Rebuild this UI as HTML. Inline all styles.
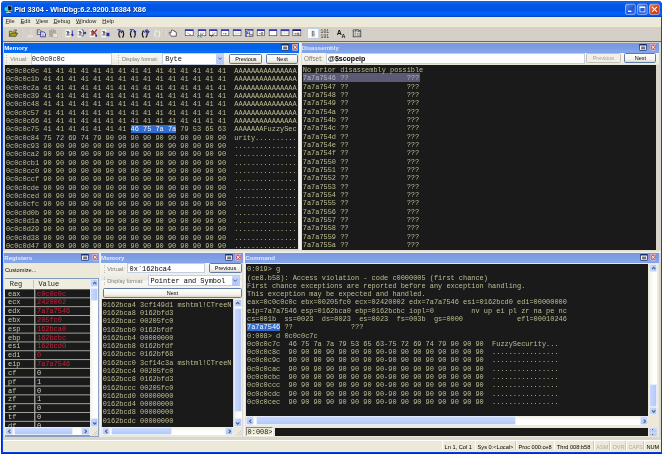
<!DOCTYPE html><html><head><meta charset="utf-8"><title>Pid 3304 - WinDbg:6.2.9200.16384 X86</title><style>
html,body{margin:0;padding:0}
body{will-change:transform;width:662px;height:454px;position:relative;overflow:hidden;background:#fff;font-family:"Liberation Sans",sans-serif;font-size:5.65px;color:#000}
div,span,svg{position:absolute;box-sizing:border-box}
.m{font-family:"Liberation Mono",monospace;font-size:6.93px;white-space:pre;color:#bebe94;line-height:8.3px;height:8.3px}
.u{white-space:pre;line-height:8px;height:8px}
.t{font-weight:bold;color:#fff;font-size:6.1px;white-space:pre;line-height:9.5px}
u{text-decoration:underline;text-decoration-color:rgba(0,0,0,0.45);text-underline-offset:0.4px}
.mn{font-size:5.7px;color:#222}
span.h{position:static;background:#2f6cd0;color:#f4f4ff}
.btn{font-size:5.5px;border:0.6px solid #5f7ba6;border-radius:1.6px;background:linear-gradient(#fff,#f3f2ea 70%,#d9d6c8);text-align:center;line-height:8.4px;white-space:pre}
.inp{background:#fff;border:0.6px solid #c2cfe0}
</style></head><body>
<div style="left:1px;top:1px;width:661px;height:453px;background:linear-gradient(90deg,#0019cf 0,#0a3cdc 1.2px,#166aee 2.3px,#0054e3 3px,#0054e3 659.6px,#0349d6 660.6px,#0030c4 661px);border-radius:3.8px 3.8px 0 0"></div>
<div style="left:1px;top:451.7px;width:661px;height:2.3px;background:linear-gradient(#0a4ade,#0019cf)"></div>
<div style="left:1px;top:1px;width:661px;height:15.6px;border-radius:3.8px 3.8px 0 0;background:linear-gradient(#0c5cec 0,#1169f3 8%,#0657e5 20%,#0054e2 55%,#0262f6 76%,#0260f4 88%,#0048d2 96%,#0040c8 100%)"></div>
<div style="left:3.3px;top:16.5px;width:657.7px;height:435.2px;background:#d9d6cc"></div>
<div style="left:3.3px;top:16.5px;width:657.7px;height:10.8px;background:#ece9d8"></div>
<div style="left:3.3px;top:43px;width:1.7px;height:394px;background:#d6d2c6"></div>
<div style="left:3.3px;top:249.5px;width:657.7px;height:3.5px;background:linear-gradient(#dedbd2,#f4f3ee)"></div>
<div style="left:298px;top:43px;width:4.4px;height:207px;background:linear-gradient(90deg,#dcd9d0,#fbfaf8 50%,#d8d5cc)"></div>
<div style="left:98.6px;top:253px;width:2.8px;height:184px;background:linear-gradient(90deg,#d8d5cc,#f8f7f4 60%,#ecebe4)"></div>
<div style="left:242.4px;top:253px;width:3.2px;height:184px;background:linear-gradient(90deg,#d8d5cc,#f8f7f4 60%,#d8d5cc)"></div>
<svg style="left:3.9px;top:4.6px" width="9.4" height="10.2" viewBox="0 0 9 9" preserveAspectRatio="none"><rect x="3.2" y="0.6" width="4.6" height="4.8" fill="#c8c4b8"/><rect x="3.8" y="1.1" width="3.4" height="3.6" fill="#0a0a14"/><circle cx="2.3" cy="3.6" r="1.9" fill="#1fe0d8"/><path d="M2 6.6h4.4M4 5.4v1.2" stroke="#d8d8d8" stroke-width="0.9"/><path d="M4.4 7.4l2 0.9" stroke="#103a90" stroke-width="0.9"/></svg>
<div class="ttl" style="left:14.2px;top:4.1px;width:185.8px;height:10.9px;font-weight:bold;color:#fff;font-size:7.3px;white-space:pre;line-height:11px;text-shadow:0.4px 0.5px 0 #0a2a80">Pid 3304 - WinDbg:6.2.9200.16384 X86</div>
<svg style="left:620px;top:0" width="42" height="17" viewBox="620 0 42 17"><defs><linearGradient id="gb" x1="0" y1="0" x2="1" y2="1"><stop offset="0" stop-color="#5a8ff0"/><stop offset="0.55" stop-color="#1f55dc"/><stop offset="1" stop-color="#3a72ea"/></linearGradient><linearGradient id="gr" x1="0" y1="0" x2="1" y2="1"><stop offset="0" stop-color="#ec8c6c"/><stop offset="0.5" stop-color="#d8441c"/><stop offset="1" stop-color="#c4360e"/></linearGradient></defs><rect x="625.5" y="4.2" width="9.8" height="10.2" rx="1.6" fill="url(#gb)" stroke="#fff" stroke-opacity="0.8" stroke-width="0.6"/><rect x="637.4" y="4.2" width="9.8" height="10.2" rx="1.6" fill="url(#gb)" stroke="#fff" stroke-opacity="0.8" stroke-width="0.6"/><rect x="649.5" y="4.2" width="9.8" height="10.2" rx="1.6" fill="url(#gr)" stroke="#fff" stroke-opacity="0.8" stroke-width="0.6"/><rect x="628" y="10.6" width="3.4" height="1.4" fill="#fff"/><rect x="639.9" y="7.1" width="5" height="4.8" fill="none" stroke="#fff" stroke-width="0.7"/><path d="M639.6 7.2h5.6" stroke="#fff" stroke-width="1.4"/><path d="M652 6.8l5 5M657 6.8l-5 5" stroke="#fff" stroke-width="1.1"/></svg>
<div class="u mn" style="left:5.6px;top:17.3px;width:30px;height:8px;"><u>F</u>ile</div>
<div class="u mn" style="left:20.5px;top:17.3px;width:30px;height:8px;"><u>E</u>dit</div>
<div class="u mn" style="left:35.8px;top:17.3px;width:30px;height:8px;"><u>V</u>iew</div>
<div class="u mn" style="left:53.4px;top:17.3px;width:30px;height:8px;"><u>D</u>ebug</div>
<div class="u mn" style="left:76px;top:17.3px;width:30px;height:8px;"><u>W</u>indow</div>
<div class="u mn" style="left:102.3px;top:17.3px;width:30px;height:8px;"><u>H</u>elp</div>
<div style="left:3.3px;top:27.3px;width:657.7px;height:13.7px;background:#d4d0c8"></div>
<div style="left:3.3px;top:41px;width:657.7px;height:1px;background:#6a6862"></div>
<div style="left:3.3px;top:42px;width:657.7px;height:1px;background:#d9d4c8"></div>
<svg style="left:0;top:26px" width="662" height="17" viewBox="0 26 662 17"><path d="M6.2 29v8.6" stroke="#bcb9ae" stroke-width="0.6"/><path d="M6.8 29v8.6" stroke="#e6e4dc" stroke-width="0.6"/><path d="M9.4 36.2V31.2h2.2l0.7 0.8h3.6v1.2" fill="#d8d060" stroke="#3a3a10" stroke-width="0.7"/><path d="M9.4 36.3l1.6-3.1h6.6l-1.7 3.1z" fill="#a8a01a" stroke="#3a3a10" stroke-width="0.7"/><path d="M13.6 30.4q1.4-1.1 2.6 0.1M16.4 29.6v1.3h-1.3" fill="none" stroke="#333" stroke-width="0.6"/><path d="M21.6 29v8.6" stroke="#bcb9ae" stroke-width="0.6"/><path d="M22.200000000000003 29v8.6" stroke="#e6e4dc" stroke-width="0.6"/><path d="M28.4 29.8l2.6 5.4M31.8 29.8l-2.6 5.4" stroke="#f6f5f0" stroke-width="0.9" fill="none"/><circle cx="28.6" cy="36.3" r="1" fill="none" stroke="#f0efe8" stroke-width="0.7"/><circle cx="31.6" cy="36.3" r="1" fill="none" stroke="#f0efe8" stroke-width="0.7"/><path d="M28.1 29.6l2.6 5.4M31.5 29.6l-2.6 5.4" stroke="#b4b0a4" stroke-width="0.5" fill="none"/><path d="M37.3 29.8h2.6l1.1 1.1v3.6h-3.7z" fill="#f4f4f4" stroke="#303030" stroke-width="0.7"/><path d="M38.2 31.4h1.6M38.2 32.6h1.6" stroke="#555" stroke-width="0.5"/><path d="M40.6 31.9h3.2l1.6 1.6v3.3h-4.8z" fill="#e8e8f4" stroke="#2424a0" stroke-width="0.8"/><path d="M41.8 34.2h2.4M41.8 35.4h2.4" stroke="#777" stroke-width="0.5"/><rect x="49.6" y="30.6" width="6" height="6" fill="#aeaa9c" stroke="#9a968a" stroke-width="0.5"/><rect x="51.4" y="29.8" width="2.4" height="1.5" fill="#c8c4b8" stroke="#9a968a" stroke-width="0.4"/><rect x="53" y="33.3" width="4.2" height="4" fill="#f2f1ec" stroke="#a8a498" stroke-width="0.5"/><path d="M54 34.8h2.2M54 36h2.2" stroke="#b4b0a4" stroke-width="0.4"/><path d="M61.6 29v8.6" stroke="#bcb9ae" stroke-width="0.6"/><path d="M62.2 29v8.6" stroke="#e6e4dc" stroke-width="0.6"/><rect x="65.4" y="29.4" width="5" height="7.8" fill="#fbfbf8" stroke="#dcdad0" stroke-width="0.4"/><path d="M66.30000000000001 31.4h2.6M67.0 32.6h2.6M67.0 33.8h2.2M66.30000000000001 35h3.2" stroke="#333" stroke-width="0.8"/><path d="M72.4 30.6v4" stroke="#4a4ad8" stroke-width="1.1"/><path d="M70.8 34.2h3.2l-1.6 2.4z" fill="#1c1cc0"/><rect x="77.6" y="29.4" width="5" height="7.8" fill="#fbfbf8" stroke="#dcdad0" stroke-width="0.4"/><path d="M78.5 31.4h2.6M79.19999999999999 32.6h2.6M79.19999999999999 33.8h2.2M78.5 35h3.2" stroke="#333" stroke-width="0.8"/><path d="M81.6 29.6q2 0.2 2 1.8v3.2q0 1.6-2 1.8" fill="none" stroke="#2a2ac8" stroke-width="0.8"/><path d="M83.4 32.2h1.6v-0.8l1.4 1.6-1.4 1.6v-0.8h-1.6z" fill="#1c1cc0"/><rect x="89.6" y="29.4" width="5" height="7.8" fill="#fbfbf8" stroke="#dcdad0" stroke-width="0.4"/><path d="M90.5 31.4h2.6M91.19999999999999 32.6h2.6M91.19999999999999 33.8h2.2M90.5 35h3.2" stroke="#333" stroke-width="0.8"/><path d="M92.2 30l4 4.6M96.8 29.6l-4.4 5.4" stroke="#a81414" stroke-width="1.1"/><circle cx="96.2" cy="35.8" r="1" fill="#2020c0"/><rect x="101.4" y="29.4" width="5" height="7.8" fill="#fbfbf8" stroke="#dcdad0" stroke-width="0.4"/><path d="M102.30000000000001 31.4h2.6M103.0 32.6h2.6M103.0 33.8h2.2M102.30000000000001 35h3.2" stroke="#333" stroke-width="0.8"/><rect x="106.6" y="32.8" width="2.8" height="3.4" fill="#2424c8"/><path d="M106.6 32.8v3.4" stroke="#5a5ad8" stroke-width="0.6"/><path d="M120.4 30.9q-1.3 0-1.3 1.3v0.9q0 0.9-0.9 0.9q0.9 0 0.9 0.9v0.9q0 1.3 1.3 1.3" fill="none" stroke="#141414" stroke-width="1.1"/><path d="M122.10000000000001 30.9q1.3 0 1.3 1.3v0.9q0 0.9 0.9 0.9q-0.9 0-0.9 0.9v0.9q0 1.3-1.3 1.3" fill="none" stroke="#141414" stroke-width="1.1"/><path d="M117.4 29.8q3.6-0.8 4.2 1.4" fill="none" stroke="#2a2ad0" stroke-width="1"/><path d="M120 31.2h3l-1.5 2.4z" fill="#1c1cc0"/><path d="M132.0 30.9q-1.3 0-1.3 1.3v0.9q0 0.9-0.9 0.9q0.9 0 0.9 0.9v0.9q0 1.3 1.3 1.3" fill="none" stroke="#141414" stroke-width="1.1"/><path d="M133.70000000000002 30.9q1.3 0 1.3 1.3v0.9q0 0.9 0.9 0.9q-0.9 0-0.9 0.9v0.9q0 1.3-1.3 1.3" fill="none" stroke="#141414" stroke-width="1.1"/><path d="M129.8 29.7q4.4-0.8 5.2 1.4" fill="none" stroke="#2a2ad0" stroke-width="1"/><path d="M133.4 31.1h3l-1.5 2.4z" fill="#1c1cc0"/><path d="M143.89999999999998 30.9q-1.3 0-1.3 1.3v0.9q0 0.9-0.9 0.9q0.9 0 0.9 0.9v0.9q0 1.3 1.3 1.3" fill="none" stroke="#141414" stroke-width="1.1"/><path d="M145.6 30.9q1.3 0 1.3 1.3v0.9q0 0.9 0.9 0.9q-0.9 0-0.9 0.9v0.9q0 1.3-1.3 1.3" fill="none" stroke="#141414" stroke-width="1.1"/><path d="M144.7 32.8q0-3.2 2.2-3q1.6 0.2 1.5 1.6" fill="none" stroke="#2a2ad0" stroke-width="1"/><path d="M146.8 31.2h3l-1.5 2.4z" fill="#1c1cc0"/><path d="M156.39999999999998 30.9q-1.3 0-1.3 1.3v0.9q0 0.9-0.9 0.9q0.9 0 0.9 0.9v0.9q0 1.3 1.3 1.3" fill="none" stroke="#f6f5f0" stroke-width="1"/><path d="M158.1 30.9q1.3 0 1.3 1.3v0.9q0 0.9 0.9 0.9q-0.9 0-0.9 0.9v0.9q0 1.3-1.3 1.3" fill="none" stroke="#f6f5f0" stroke-width="1"/><path d="M154.4 30.2h2.2v2" fill="none" stroke="#efede6" stroke-width="0.7"/><path d="M165 29v8.6" stroke="#bcb9ae" stroke-width="0.6"/><path d="M165.6 29v8.6" stroke="#e6e4dc" stroke-width="0.6"/><path d="M170.9 33.2l-1.5-0.9q-0.7 0.2-0.2 1l2.1 2.9h5v-3.8q-0.2-0.9-1-0.4q0-1.1-1.1-0.7q-0.2-1.2-1.3-0.7q-0.3-1.1-1.4-0.5z" fill="#fff" stroke="#222" stroke-width="0.7"/><path d="M181.4 29v8.6" stroke="#bcb9ae" stroke-width="0.6"/><path d="M182.0 29v8.6" stroke="#e6e4dc" stroke-width="0.6"/><rect x="185.2" y="29.9" width="8" height="5.8" fill="#fff" stroke="#444" stroke-width="0.65"/><rect x="185.0" y="29.4" width="8.4" height="1.6" fill="#3434b4"/><path d="M187.4 32.6l1.2 1.2M189.2 34.4h1.6" stroke="#444" stroke-width="0.6"/><rect x="198.2" y="29.9" width="7.6" height="5.8" fill="#fff" stroke="#444" stroke-width="0.65"/><rect x="198.0" y="29.4" width="8.0" height="1.6" fill="#3434b4"/><path d="M200 33.2h1.6M202.4 33.2h1.8M200 34.4h3" stroke="#555" stroke-width="0.6"/><path d="M197.2 36.2l1.4 1.2M200 36.2l1.4 1.2" stroke="#108888" stroke-width="1"/><rect x="209.6" y="29.9" width="7.4" height="5.8" fill="#fff" stroke="#444" stroke-width="0.65"/><rect x="209.4" y="29.4" width="7.800000000000001" height="1.6" fill="#3434b4"/><path d="M212 33h1.2M214 33h1.6" stroke="#555" stroke-width="0.6"/><path d="M210 34.6l1.6 1.8l2-2.6" stroke="#222" stroke-width="0.9" fill="none"/><path d="M213.8 34.4l1 1.4" stroke="#c8b820" stroke-width="1"/><rect x="221.2" y="29.9" width="7.6" height="5.8" fill="#fff" stroke="#444" stroke-width="0.65"/><rect x="221.0" y="29.4" width="8.0" height="1.6" fill="#3434b4"/><path d="M223 33.6h1.4M225 33.2l1.4 0.8M225 34.4l1.4-0.8" stroke="#333" stroke-width="0.6"/><rect x="233.2" y="29.9" width="7.8" height="5.8" fill="#fff" stroke="#444" stroke-width="0.65"/><rect x="233.0" y="29.4" width="8.2" height="1.6" fill="#3434b4"/><path d="M235.8 31.2v4.6M238.4 31.2v4.6M233.4 33.4h7.4" stroke="#c4c2ba" stroke-width="0.5"/><rect x="245.6" y="29.6" width="7.4" height="6.6" fill="#f4f4f0" stroke="#3a3a3a" stroke-width="0.6"/><rect x="247.6" y="29.3" width="5.6" height="1.4" fill="#3a3ab4"/><rect x="245.4" y="29.6" width="1.6" height="1.6" fill="#fff" stroke="#222" stroke-width="0.5"/><rect x="247.6" y="32" width="2.2" height="1.8" fill="#fff" stroke="#222" stroke-width="0.5"/><rect x="249.8" y="34.2" width="2.4" height="1.8" fill="#fff" stroke="#222" stroke-width="0.5"/><path d="M246.4 31.2v5.4" stroke="#4a4ad0" stroke-width="0.9"/><rect x="257.2" y="29.9" width="7.4" height="5.8" fill="#fff" stroke="#444" stroke-width="0.65"/><rect x="257.0" y="29.4" width="7.800000000000001" height="1.6" fill="#3434b4"/><path d="M259 33.6h1.4M261.2 32.6h1.6v1.8h-1.6z" stroke="#333" stroke-width="0.6" fill="none"/><rect x="269.2" y="29.9" width="7.6" height="5.8" fill="#fff" stroke="#444" stroke-width="0.65"/><rect x="269.0" y="29.4" width="8.0" height="1.6" fill="#3434b4"/><rect x="281" y="29.9" width="8" height="5.8" fill="#e4e3dc" stroke="#444" stroke-width="0.65"/><rect x="280.8" y="29.4" width="8.4" height="1.6" fill="#3434b4"/><path d="M282.4 32.8h2M285.4 32.8h2.6M282.4 34.4h5.6" stroke="#fff" stroke-width="0.7"/><rect x="292.8" y="29.9" width="8" height="5.8" fill="#fff" stroke="#444" stroke-width="0.65"/><rect x="292.6" y="29.4" width="8.4" height="1.6" fill="#14147c"/><path d="M294.4 33.4h2.2M297.4 33h1.6v1.8h-1.6z" stroke="#333" stroke-width="0.6" fill="none"/><path d="M294.4 34.8h2" stroke="#666" stroke-width="0.6"/><path d="M304.4 29v8.6" stroke="#bcb9ae" stroke-width="0.6"/><path d="M305.0 29v8.6" stroke="#e6e4dc" stroke-width="0.6"/><rect x="307.4" y="28.4" width="11.4" height="10" rx="1" fill="#fdfdfb" stroke="#a8bce0" stroke-width="0.7"/><path d="M311.4 30.6h3.4v6.2h-3.4z" fill="#fff" stroke="#c8c8c8" stroke-width="0.4"/><path d="M312 31.6h2.2M312.8 33h1.8M312.8 34.4h1.8M312 35.8h2.4M312.4 31.6v4" stroke="#333" stroke-width="0.6" fill="none"/><text x="320.6" y="32.9" font-family="Liberation Mono,monospace" font-size="4.6" fill="#333" textLength="8.4" lengthAdjust="spacingAndGlyphs">101</text><text x="320.6" y="37.5" font-family="Liberation Mono,monospace" font-size="4.6" fill="#333" textLength="8.4" lengthAdjust="spacingAndGlyphs">101</text><path d="M333.4 29v8.6" stroke="#bcb9ae" stroke-width="0.6"/><path d="M334.0 29v8.6" stroke="#e6e4dc" stroke-width="0.6"/><text x="336.8" y="35.4" font-family="Liberation Sans,sans-serif" font-size="7" font-weight="bold" fill="#111">A</text><text x="341.5" y="37.6" font-family="Liberation Sans,sans-serif" font-size="5.4" font-weight="bold" fill="#111">A</text><path d="M349 29v8.6" stroke="#bcb9ae" stroke-width="0.6"/><path d="M349.6 29v8.6" stroke="#e6e4dc" stroke-width="0.6"/><rect x="353.2" y="31" width="7.6" height="5.8" fill="#f6f6f2" stroke="#222" stroke-width="0.7"/><path d="M353.2 31v-1.2h2.4v1.2M356 31v-1.4h2.6v1.4" fill="#ddd" stroke="#222" stroke-width="0.6"/><path d="M354.4 32.8h2M354.4 34h2M354.4 35.2h2" stroke="#444" stroke-width="0.6"/><path d="M358 30.6l1 1l1.8-2.2" stroke="#333" stroke-width="0.7" fill="none"/><rect x="357.6" y="33" width="2.4" height="2.6" fill="#ccc" stroke="#555" stroke-width="0.4"/></svg>
<div style="left:4.2px;top:43px;width:295.3px;height:9.5px;background:linear-gradient(#0a62e6,#0060e8 50%,#0870f8 85%,#0a68f0)"></div>
<div class="t" style="left:4.3px;top:43px;width:79.9px;height:9.5px;">Memory</div>
<svg style="left:281.3px;top:44.3px" width="8" height="6.8" viewBox="0 0 8 6.8"><rect x="0.4" y="0.5" width="7.2" height="5.8" rx="0.6" fill="#fff" stroke="#0a246a" stroke-width="0.8"/><path d="M0.4 0.9h7.2" stroke="#0a246a" stroke-width="1.2"/><path d="M2.6 2.6v2.4h1.2v-2.4M4.6 2.6v2.4h1.2v-2.4" stroke="#444" stroke-width="0.6" fill="#888"/></svg>
<svg style="left:291.8px;top:44.4px" width="6.4" height="6.6" viewBox="0 0 6.4 6.6"><rect x="0.3" y="0.3" width="5.8" height="6" rx="1" fill="#e2522a" stroke="#fff" stroke-width="0.6"/><path d="M1.7 1.8L4.7 4.8M4.7 1.8L1.7 4.8" stroke="#fff" stroke-width="1"/></svg>
<div style="left:4.2px;top:52.5px;width:294.2px;height:12.9px;background:linear-gradient(#f7f6f1,#f1f0e8 70%,#e6e4da)"></div>
<div style="left:6.3px;top:55px;width:1px;height:8.5px;background:repeating-linear-gradient(#c2bfb2 0,#c2bfb2 0.8px,transparent 0.8px,transparent 1.8px)"></div>
<div class="u" style="left:10.3px;top:54.8px;width:19.7px;height:8px;color:#807e74">Virtual:</div>
<div class="inp" style="left:30.5px;top:53px;width:81.9px;height:12px;"><div class="m" style="left:0.2px;top:1px;color:#111">0c0c0c0c</div></div>
<div style="left:118px;top:55px;width:1px;height:8.5px;background:repeating-linear-gradient(#c2bfb2 0,#c2bfb2 0.8px,transparent 0.8px,transparent 1.8px)"></div>
<div class="u" style="left:121.9px;top:54.6px;width:38.1px;height:8px;color:#807e74;font-size:5.45px">Display format:</div>
<div class="inp" style="left:162.3px;top:53px;width:61.7px;height:12px;"><div class="m" style="left:2px;top:1.4px;color:#111">Byte</div></div>
<div style="left:216px;top:54.3px;width:7.5px;height:9.3px;background:linear-gradient(#c6d4fb,#b0c4f5);border-radius:1px"><svg style="left:1.6px;top:3px" width="4.4" height="3.2" viewBox="0 0 4.4 3.2"><path d="M0.4 0.5L2.2 2.4L4 0.5" stroke="#4d6185" stroke-width="1" fill="none"/></svg></div>
<div class="btn" style="left:229.2px;top:54.3px;width:33.3px;height:9.3px;">Previous</div>
<div class="btn" style="left:265.7px;top:54.3px;width:32.7px;height:9.3px;">Next</div>
<div style="left:4.7px;top:65.2px;width:293.5px;height:184.3px;background:#1a1a1a"></div>
<div class="m" style="left:5.9px;top:66.85px">0c0c0c0c 41 41 41 41 41 41 41 41 41 41 41 41 41 41 41  AAAAAAAAAAAAAAA</div>
<div class="m" style="left:5.9px;top:74.85px">0c0c0c1b 41 41 41 41 41 41 41 41 41 41 41 41 41 41 41  AAAAAAAAAAAAAAA</div>
<div class="m" style="left:5.9px;top:83.85px">0c0c0c2a 41 41 41 41 41 41 41 41 41 41 41 41 41 41 41  AAAAAAAAAAAAAAA</div>
<div class="m" style="left:5.9px;top:91.85px">0c0c0c39 41 41 41 41 41 41 41 41 41 41 41 41 41 41 41  AAAAAAAAAAAAAAA</div>
<div class="m" style="left:5.9px;top:99.85px">0c0c0c48 41 41 41 41 41 41 41 41 41 41 41 41 41 41 41  AAAAAAAAAAAAAAA</div>
<div class="m" style="left:5.9px;top:108.85px">0c0c0c57 41 41 41 41 41 41 41 41 41 41 41 41 41 41 41  AAAAAAAAAAAAAAA</div>
<div class="m" style="left:5.9px;top:116.85px">0c0c0c66 41 41 41 41 41 41 41 41 41 41 41 41 41 41 41  AAAAAAAAAAAAAAA</div>
<div class="m" style="left:5.9px;top:124.85px">0c0c0c75 41 41 41 41 41 41 41 <span class="h">46 75 7a 7a</span> 79 53 65 63  AAAAAAAFuzzySec</div>
<div class="m" style="left:5.9px;top:133.85px">0c0c0c84 75 72 69 74 79 90 90 90 90 90 90 90 90 90 90  urity..........</div>
<div class="m" style="left:5.9px;top:141.85px">0c0c0c93 90 90 90 90 90 90 90 90 90 90 90 90 90 90 90  ...............</div>
<div class="m" style="left:5.9px;top:149.85px">0c0c0ca2 90 90 90 90 90 90 90 90 90 90 90 90 90 90 90  ...............</div>
<div class="m" style="left:5.9px;top:158.85px">0c0c0cb1 90 90 90 90 90 90 90 90 90 90 90 90 90 90 90  ...............</div>
<div class="m" style="left:5.9px;top:166.85px">0c0c0cc0 90 90 90 90 90 90 90 90 90 90 90 90 90 90 90  ...............</div>
<div class="m" style="left:5.9px;top:174.85px">0c0c0ccf 90 90 90 90 90 90 90 90 90 90 90 90 90 90 90  ...............</div>
<div class="m" style="left:5.9px;top:183.85px">0c0c0cde 90 90 90 90 90 90 90 90 90 90 90 90 90 90 90  ...............</div>
<div class="m" style="left:5.9px;top:191.85px">0c0c0ced 90 90 90 90 90 90 90 90 90 90 90 90 90 90 90  ...............</div>
<div class="m" style="left:5.9px;top:199.85px">0c0c0cfc 90 90 90 90 90 90 90 90 90 90 90 90 90 90 90  ...............</div>
<div class="m" style="left:5.9px;top:208.85px">0c0c0d0b 90 90 90 90 90 90 90 90 90 90 90 90 90 90 90  ...............</div>
<div class="m" style="left:5.9px;top:216.85px">0c0c0d1a 90 90 90 90 90 90 90 90 90 90 90 90 90 90 90  ...............</div>
<div class="m" style="left:5.9px;top:224.85px">0c0c0d29 90 90 90 90 90 90 90 90 90 90 90 90 90 90 90  ...............</div>
<div class="m" style="left:5.9px;top:233.85px">0c0c0d38 90 90 90 90 90 90 90 90 90 90 90 90 90 90 90  ...............</div>
<div class="m" style="left:5.9px;top:241.85px">0c0c0d47 90 90 90 90 90 90 90 90 90 90 90 90 90 90 90  ...............</div>
<div style="left:301.5px;top:43px;width:357.1px;height:9.5px;background:linear-gradient(#7a96e0,#7e9ce4 50%,#84a8ec 90%,#7f9ee6)"></div>
<div class="t" style="left:301.6px;top:43px;width:79.9px;height:9.5px;color:#e2eafc">Disassembly</div>
<svg style="left:638.9px;top:44.3px" width="8" height="6.8" viewBox="0 0 8 6.8"><rect x="0.4" y="0.5" width="7.2" height="5.8" rx="0.6" fill="#fff" stroke="#0a246a" stroke-width="0.8"/><path d="M0.4 0.9h7.2" stroke="#0a246a" stroke-width="1.2"/><path d="M2.6 2.6v2.4h1.2v-2.4M4.6 2.6v2.4h1.2v-2.4" stroke="#444" stroke-width="0.6" fill="#888"/></svg>
<svg style="left:649.8px;top:44.4px" width="6.4" height="6.6" viewBox="0 0 6.4 6.6"><rect x="0.3" y="0.3" width="5.8" height="6" rx="1" fill="#cc5a72" stroke="#f0dfe6" stroke-width="0.6"/><path d="M1.7 1.8L4.7 4.8M4.7 1.8L1.7 4.8" stroke="#fff" stroke-width="1"/></svg>
<div style="left:301.5px;top:52.5px;width:357.1px;height:12.1px;background:linear-gradient(#f7f6f1,#f1f0e8 70%,#e6e4da)"></div>
<div class="u" style="left:304px;top:55.1px;width:20px;height:8px;color:#807e74;font-size:6.4px">Offset:</div>
<div class="inp" style="left:325.5px;top:53px;width:259.5px;height:10.6px;"><div class="u" style="left:1.6px;top:1.2px;color:#000;font-weight:bold;font-size:7px">@$scopeip</div></div>
<div class="btn" style="left:586.2px;top:53px;width:34.4px;height:9.8px;color:#a8a698;border-color:#c4c2b4;background:#f2f0e6">Previous</div>
<div class="btn" style="left:624.3px;top:53px;width:32.1px;height:9.8px;">Next</div>
<div style="left:302px;top:64.5px;width:354.4px;height:185.5px;background:#1a1a1a"></div>
<div style="left:302.8px;top:73.4px;width:116.8px;height:8.3px;background:#5a5a74"></div>
<div class="m" style="left:302.8px;top:65.85px">No prior disassembly possible</div>
<div class="m" style="left:302.8px;top:73.85px"><span style="color:#b4b4c4">7a7a7546 ??              ???</span></div>
<div class="m" style="left:302.8px;top:82.85px">7a7a7547 ??              ???</div>
<div class="m" style="left:302.8px;top:90.85px">7a7a7548 ??              ???</div>
<div class="m" style="left:302.8px;top:98.85px">7a7a7549 ??              ???</div>
<div class="m" style="left:302.8px;top:107.85px">7a7a754a ??              ???</div>
<div class="m" style="left:302.8px;top:115.85px">7a7a754b ??              ???</div>
<div class="m" style="left:302.8px;top:123.85px">7a7a754c ??              ???</div>
<div class="m" style="left:302.8px;top:132.85px">7a7a754d ??              ???</div>
<div class="m" style="left:302.8px;top:140.85px">7a7a754e ??              ???</div>
<div class="m" style="left:302.8px;top:148.85px">7a7a754f ??              ???</div>
<div class="m" style="left:302.8px;top:157.85px">7a7a7550 ??              ???</div>
<div class="m" style="left:302.8px;top:165.85px">7a7a7551 ??              ???</div>
<div class="m" style="left:302.8px;top:173.85px">7a7a7552 ??              ???</div>
<div class="m" style="left:302.8px;top:182.85px">7a7a7553 ??              ???</div>
<div class="m" style="left:302.8px;top:190.85px">7a7a7554 ??              ???</div>
<div class="m" style="left:302.8px;top:198.85px">7a7a7555 ??              ???</div>
<div class="m" style="left:302.8px;top:207.85px">7a7a7556 ??              ???</div>
<div class="m" style="left:302.8px;top:215.85px">7a7a7557 ??              ???</div>
<div class="m" style="left:302.8px;top:223.85px">7a7a7558 ??              ???</div>
<div class="m" style="left:302.8px;top:232.85px">7a7a7559 ??              ???</div>
<div class="m" style="left:302.8px;top:240.85px">7a7a755a ??              ???</div>
<div style="left:4.2px;top:253px;width:94.4px;height:9.5px;background:linear-gradient(#7a96e0,#7e9ce4 50%,#84a8ec 90%,#7f9ee6)"></div>
<div class="t" style="left:4.3px;top:253px;width:79.9px;height:9.5px;color:#e2eafc">Registers</div>
<svg style="left:80.8px;top:254.3px" width="8" height="6.8" viewBox="0 0 8 6.8"><rect x="0.4" y="0.5" width="7.2" height="5.8" rx="0.6" fill="#fff" stroke="#0a246a" stroke-width="0.8"/><path d="M0.4 0.9h7.2" stroke="#0a246a" stroke-width="1.2"/><path d="M2.6 2.6v2.4h1.2v-2.4M4.6 2.6v2.4h1.2v-2.4" stroke="#444" stroke-width="0.6" fill="#888"/></svg>
<svg style="left:91.9px;top:254.4px" width="6.4" height="6.6" viewBox="0 0 6.4 6.6"><rect x="0.3" y="0.3" width="5.8" height="6" rx="1" fill="#cc5a72" stroke="#f0dfe6" stroke-width="0.6"/><path d="M1.7 1.8L4.7 4.8M4.7 1.8L1.7 4.8" stroke="#fff" stroke-width="1"/></svg>
<div style="left:4.2px;top:262.5px;width:94.4px;height:174.5px;background:#ece9d8"></div>
<div class="u" style="left:5px;top:265.6px;width:55px;height:8px;">Customize...</div>
<div style="left:4.5px;top:278.3px;width:93.5px;height:158px;background:#fff;border:0.6px solid #7f9db9"></div>
<div style="left:5px;top:278.8px;width:84.6px;height:10.2px;background:#efede0"></div>
<div style="left:33.4px;top:280px;width:0.6px;height:7.6px;background:#c8c5b2"></div>
<div class="m" style="left:9.8px;top:279.6px;color:#222">Reg</div><div class="m" style="left:38.4px;top:279.6px;color:#222">Value</div>
<svg style="left:4.8px;top:288.6px" width="85" height="138.6" viewBox="0 0 85 138.6"><rect width="85" height="138.6" fill="#a8a8a0"/><rect x="0" y="0.50" width="29.1" height="7.85" fill="#1a1a1a"/><rect x="30.4" y="0.50" width="54.6" height="7.85" fill="#1a1a1a"/><rect x="0" y="9.32" width="29.1" height="7.85" fill="#1a1a1a"/><rect x="30.4" y="9.32" width="54.6" height="7.85" fill="#1a1a1a"/><rect x="0" y="18.14" width="29.1" height="7.85" fill="#1a1a1a"/><rect x="30.4" y="18.14" width="54.6" height="7.85" fill="#1a1a1a"/><rect x="0" y="26.96" width="29.1" height="7.85" fill="#1a1a1a"/><rect x="30.4" y="26.96" width="54.6" height="7.85" fill="#1a1a1a"/><rect x="0" y="35.78" width="29.1" height="7.85" fill="#1a1a1a"/><rect x="30.4" y="35.78" width="54.6" height="7.85" fill="#1a1a1a"/><rect x="0" y="44.60" width="29.1" height="7.85" fill="#1a1a1a"/><rect x="30.4" y="44.60" width="54.6" height="7.85" fill="#1a1a1a"/><rect x="0" y="53.42" width="29.1" height="7.85" fill="#1a1a1a"/><rect x="30.4" y="53.42" width="54.6" height="7.85" fill="#1a1a1a"/><rect x="0" y="62.24" width="29.1" height="7.85" fill="#1a1a1a"/><rect x="30.4" y="62.24" width="54.6" height="7.85" fill="#1a1a1a"/><rect x="0" y="71.06" width="29.1" height="7.85" fill="#1a1a1a"/><rect x="30.4" y="71.06" width="54.6" height="7.85" fill="#1a1a1a"/><rect x="0" y="79.88" width="29.1" height="7.85" fill="#1a1a1a"/><rect x="30.4" y="79.88" width="54.6" height="7.85" fill="#1a1a1a"/><rect x="0" y="88.70" width="29.1" height="7.85" fill="#1a1a1a"/><rect x="30.4" y="88.70" width="54.6" height="7.85" fill="#1a1a1a"/><rect x="0" y="97.52" width="29.1" height="7.85" fill="#1a1a1a"/><rect x="30.4" y="97.52" width="54.6" height="7.85" fill="#1a1a1a"/><rect x="0" y="106.34" width="29.1" height="7.85" fill="#1a1a1a"/><rect x="30.4" y="106.34" width="54.6" height="7.85" fill="#1a1a1a"/><rect x="0" y="115.16" width="29.1" height="7.85" fill="#1a1a1a"/><rect x="30.4" y="115.16" width="54.6" height="7.85" fill="#1a1a1a"/><rect x="0" y="123.98" width="29.1" height="7.85" fill="#1a1a1a"/><rect x="30.4" y="123.98" width="54.6" height="7.85" fill="#1a1a1a"/><rect x="0" y="132.80" width="29.1" height="7.85" fill="#1a1a1a"/><rect x="30.4" y="132.80" width="54.6" height="7.85" fill="#1a1a1a"/></svg>
<div class="m" style="left:8px;top:289.85px;color:#cacab0">eax</div><div class="m" style="left:37px;top:289.85px;color:#cc1f3a">c0c0c0c</div>
<div class="m" style="left:8px;top:297.85px;color:#cacab0">ecx</div><div class="m" style="left:37px;top:297.85px;color:#cc1f3a">2420002</div>
<div class="m" style="left:8px;top:306.85px;color:#cacab0">edx</div><div class="m" style="left:37px;top:306.85px;color:#cc1f3a">7a7a7546</div>
<div class="m" style="left:8px;top:315.85px;color:#cacab0">ebx</div><div class="m" style="left:37px;top:315.85px;color:#cc1f3a">205fc0</div>
<div class="m" style="left:8px;top:324.85px;color:#cacab0">esp</div><div class="m" style="left:37px;top:324.85px;color:#cc1f3a">162bca0</div>
<div class="m" style="left:8px;top:333.85px;color:#cacab0">ebp</div><div class="m" style="left:37px;top:333.85px;color:#cc1f3a">162bcbc</div>
<div class="m" style="left:8px;top:341.85px;color:#cacab0">esi</div><div class="m" style="left:37px;top:341.85px;color:#cc1f3a">162bcd0</div>
<div class="m" style="left:8px;top:350.85px;color:#cacab0">edi</div><div class="m" style="left:37px;top:350.85px;color:#cc1f3a">0</div>
<div class="m" style="left:8px;top:359.85px;color:#cacab0">eip</div><div class="m" style="left:37px;top:359.85px;color:#cc1f3a">7a7a7546</div>
<div class="m" style="left:8px;top:368.85px;color:#cacab0">cf</div><div class="m" style="left:37px;top:368.85px;color:#d4d4c8">0</div>
<div class="m" style="left:8px;top:377.85px;color:#cacab0">pf</div><div class="m" style="left:37px;top:377.85px;color:#d4d4c8">1</div>
<div class="m" style="left:8px;top:386.85px;color:#cacab0">af</div><div class="m" style="left:37px;top:386.85px;color:#d4d4c8">0</div>
<div class="m" style="left:8px;top:394.85px;color:#cacab0">zf</div><div class="m" style="left:37px;top:394.85px;color:#d4d4c8">1</div>
<div class="m" style="left:8px;top:403.85px;color:#cacab0">sf</div><div class="m" style="left:37px;top:403.85px;color:#d4d4c8">0</div>
<div class="m" style="left:8px;top:412.85px;color:#cacab0">tf</div><div class="m" style="left:37px;top:412.85px;color:#d4d4c8">0</div>
<div style="left:4.8px;top:421.6px;width:85px;height:5.6px;overflow:hidden"><div class="m" style="left:3.2px;top:0.4px;color:#cacab0">df</div><div class="m" style="left:32.2px;top:0.4px;color:#d4d4c8">0</div></div>
<div style="left:101px;top:253px;width:141.8px;height:9.5px;background:linear-gradient(#7a96e0,#7e9ce4 50%,#84a8ec 90%,#7f9ee6)"></div>
<div class="t" style="left:101.1px;top:253px;width:79.9px;height:9.5px;color:#e2eafc">Memory</div>
<svg style="left:224.6px;top:254.3px" width="8" height="6.8" viewBox="0 0 8 6.8"><rect x="0.4" y="0.5" width="7.2" height="5.8" rx="0.6" fill="#fff" stroke="#0a246a" stroke-width="0.8"/><path d="M0.4 0.9h7.2" stroke="#0a246a" stroke-width="1.2"/><path d="M2.6 2.6v2.4h1.2v-2.4M4.6 2.6v2.4h1.2v-2.4" stroke="#444" stroke-width="0.6" fill="#888"/></svg>
<svg style="left:234.9px;top:254.4px" width="6.4" height="6.6" viewBox="0 0 6.4 6.6"><rect x="0.3" y="0.3" width="5.8" height="6" rx="1" fill="#cc5a72" stroke="#f0dfe6" stroke-width="0.6"/><path d="M1.7 1.8L4.7 4.8M4.7 1.8L1.7 4.8" stroke="#fff" stroke-width="1"/></svg>
<div style="left:101.4px;top:262.5px;width:141px;height:36.1px;background:linear-gradient(#f7f6f1,#f1f0e8 30%,#e9e7de 46%,#f7f6f1 50%,#f1f0e8 80%,#ece9d8)"></div>
<div style="left:101.4px;top:427px;width:141px;height:10px;background:#ece9d8"></div>
<div style="left:103.5px;top:265px;width:1px;height:7.5px;background:repeating-linear-gradient(#c2bfb2 0,#c2bfb2 0.8px,transparent 0.8px,transparent 1.8px)"></div>
<div class="u" style="left:107.3px;top:264.6px;width:19.7px;height:8px;color:#807e74">Virtual:</div>
<div class="inp" style="left:127.2px;top:263.2px;width:77.8px;height:9.6px;"><div class="m" style="left:1.4px;top:0.7px;color:#000">0x`162bca4</div></div>
<div class="btn" style="left:209.2px;top:263.2px;width:32.6px;height:9.4px;">Previous</div>
<div style="left:103.5px;top:276.5px;width:1px;height:8.5px;background:repeating-linear-gradient(#c2bfb2 0,#c2bfb2 0.8px,transparent 0.8px,transparent 1.8px)"></div>
<div class="u" style="left:107.3px;top:276.6px;width:39.7px;height:8px;color:#807e74;font-size:5.45px">Display format:</div>
<div class="inp" style="left:147.5px;top:274.8px;width:92.1px;height:11.4px;"><div class="m" style="left:2px;top:1.6px;color:#000">Pointer and Symbol</div></div>
<div style="left:232px;top:275.5px;width:7px;height:10px;background:linear-gradient(#c6d4fb,#b0c4f5);border-radius:1px"><svg style="left:1.4px;top:3.4px" width="4.4" height="3.2" viewBox="0 0 4.4 3.2"><path d="M0.4 0.5L2.2 2.4L4 0.5" stroke="#4d6185" stroke-width="1" fill="none"/></svg></div>
<div class="btn" style="left:103.1px;top:288.4px;width:138.7px;height:9.2px;">Next</div>
<div style="left:102px;top:298.6px;width:131.4px;height:128.6px;background:#1a1a1a;overflow:hidden"></div>
<div class="m" style="left:102.7px;top:300.85px">0162bca4 3cf149d1 mshtml!CTreeN</div>
<div class="m" style="left:102.7px;top:308.85px">0162bca8 0162bfd3</div>
<div class="m" style="left:102.7px;top:316.85px">0162bcac 00205fc0</div>
<div class="m" style="left:102.7px;top:325.85px">0162bcb0 0162bfdf</div>
<div class="m" style="left:102.7px;top:333.85px">0162bcb4 00000000</div>
<div class="m" style="left:102.7px;top:341.85px">0162bcb8 0162bfdf</div>
<div class="m" style="left:102.7px;top:349.85px">0162bcbc 0162bf68</div>
<div class="m" style="left:102.7px;top:358.85px">0162bcc0 3cf14c3a mshtml!CTreeN</div>
<div class="m" style="left:102.7px;top:366.85px">0162bcc4 00205fc0</div>
<div class="m" style="left:102.7px;top:374.85px">0162bcc8 0162bfd3</div>
<div class="m" style="left:102.7px;top:383.85px">0162bccc 00205fc0</div>
<div class="m" style="left:102.7px;top:391.85px">0162bcd0 00000000</div>
<div class="m" style="left:102.7px;top:399.85px">0162bcd4 00000000</div>
<div class="m" style="left:102.7px;top:407.85px">0162bcd8 00000000</div>
<div class="m" style="left:102.7px;top:416.85px">0162bcdc 00000000</div>
<div style="left:245.1px;top:253px;width:413.5px;height:9.5px;background:linear-gradient(#7a96e0,#7e9ce4 50%,#84a8ec 90%,#7f9ee6)"></div>
<div class="t" style="left:245.2px;top:253px;width:79.9px;height:9.5px;color:#e2eafc">Command</div>
<svg style="left:639.5px;top:254.3px" width="8" height="6.8" viewBox="0 0 8 6.8"><rect x="0.4" y="0.5" width="7.2" height="5.8" rx="0.6" fill="#fff" stroke="#0a246a" stroke-width="0.8"/><path d="M0.4 0.9h7.2" stroke="#0a246a" stroke-width="1.2"/><path d="M2.6 2.6v2.4h1.2v-2.4M4.6 2.6v2.4h1.2v-2.4" stroke="#444" stroke-width="0.6" fill="#888"/></svg>
<svg style="left:650.1px;top:254.4px" width="6.4" height="6.6" viewBox="0 0 6.4 6.6"><rect x="0.3" y="0.3" width="5.8" height="6" rx="1" fill="#cc5a72" stroke="#f0dfe6" stroke-width="0.6"/><path d="M1.7 1.8L4.7 4.8M4.7 1.8L1.7 4.8" stroke="#fff" stroke-width="1"/></svg>
<div style="left:245.6px;top:262.5px;width:413px;height:174.5px;background:#ece9d8"></div>
<div style="left:246px;top:263.5px;width:402.2px;height:152px;background:#1a1a1a"></div>
<div class="m" style="left:247px;top:264.85px">0:019> g</div>
<div class="m" style="left:247px;top:273.85px">(ce8.b58): Access violation - code c0000005 (first chance)</div>
<div class="m" style="left:247px;top:281.85px">First chance exceptions are reported before any exception handling.</div>
<div class="m" style="left:247px;top:289.85px">This exception may be expected and handled.</div>
<div class="m" style="left:247px;top:297.85px">eax=0c0c0c0c ebx=00205fc0 ecx=02420002 edx=7a7a7546 esi=0162bcd0 edi=00000000</div>
<div class="m" style="left:247px;top:306.85px">eip=7a7a7546 esp=0162bca0 ebp=0162bcbc iopl=0         nv up ei pl zr na pe nc</div>
<div class="m" style="left:247px;top:314.85px">cs=001b  ss=0023  ds=0023  es=0023  fs=003b  gs=0000             efl=00010246</div>
<div class="m" style="left:247px;top:322.85px"><span class="h">7a7a7546</span> ??              ???</div>
<div class="m" style="left:247px;top:331.85px">0:008> d 0c0c0c7c</div>
<div class="m" style="left:247px;top:339.85px">0c0c0c7c  46 75 7a 7a 79 53 65 63-75 72 69 74 79 90 90 90  FuzzySecurity...</div>
<div class="m" style="left:247px;top:347.85px">0c0c0c8c  90 90 90 90 90 90 90 90-90 90 90 90 90 90 90 90  ................</div>
<div class="m" style="left:247px;top:355.85px">0c0c0c9c  90 90 90 90 90 90 90 90-90 90 90 90 90 90 90 90  ................</div>
<div class="m" style="left:247px;top:364.85px">0c0c0cac  90 90 90 90 90 90 90 90-90 90 90 90 90 90 90 90  ................</div>
<div class="m" style="left:247px;top:372.85px">0c0c0cbc  90 90 90 90 90 90 90 90-90 90 90 90 90 90 90 90  ................</div>
<div class="m" style="left:247px;top:380.85px">0c0c0ccc  90 90 90 90 90 90 90 90-90 90 90 90 90 90 90 90  ................</div>
<div class="m" style="left:247px;top:389.85px">0c0c0cdc  90 90 90 90 90 90 90 90-90 90 90 90 90 90 90 90  ................</div>
<div class="m" style="left:247px;top:397.85px">0c0c0cec  90 90 90 90 90 90 90 90-90 90 90 90 90 90 90 90  ................</div>
<div style="left:246px;top:427.2px;width:26.6px;height:9px;background:#ece9d8;border:0.6px solid #8a887c;border-right-color:#fff;border-bottom-color:#fff"><div class="m" style="left:0.6px;top:0.2px;color:#222">0:008&gt;</div></div>
<div style="left:275px;top:427.6px;width:373.2px;height:8.6px;background:#1a1a1a"></div>
<div style="left:89.7px;top:278.8px;width:8.1px;height:147.8px;background:linear-gradient(90deg,#f0efe8,#fdfdfb 50%,#fff)"></div>
<div style="left:89.7px;top:278.8px;width:8.1px;height:8.6px;background:linear-gradient(90deg,#c9d8fc,#bcd0fb 60%,#b4c8f6);border:0.5px solid #dfe8fd;border-radius:1.2px"><svg style="left:0.85px;top:1.60px" width="5.4" height="4.4" viewBox="0 0 5.4 4.4"><path d="M1 3.1L2.7 1.3L4.4 3.1" stroke="#4d6185" stroke-width="1.1" fill="none"/></svg></div>
<div style="left:89.7px;top:418px;width:8.1px;height:8.6px;background:linear-gradient(90deg,#c9d8fc,#bcd0fb 60%,#b4c8f6);border:0.5px solid #dfe8fd;border-radius:1.2px"><svg style="left:0.85px;top:1.60px" width="5.4" height="4.4" viewBox="0 0 5.4 4.4"><path d="M1 1.3L2.7 3.1L4.4 1.3" stroke="#4d6185" stroke-width="1.1" fill="none"/></svg></div>
<div style="left:89.7px;top:287.6px;width:8.1px;height:13px;background:linear-gradient(90deg,#c9d8fc,#bcd0fb 60%,#b4c8f6);border:0.5px solid #e4ecfd;border-radius:1.2px"></div>
<div style="left:5px;top:427px;width:84.6px;height:8.4px;background:linear-gradient(#f0efe8,#fdfdfb 50%,#fff)"></div>
<div style="left:5px;top:427px;width:8.4px;height:8.4px;background:linear-gradient(#c9d8fc,#bcd0fb 60%,#b4c8f6);border:0.5px solid #dfe8fd;border-radius:1.2px"><svg style="left:1.20px;top:1.40px" width="5" height="4.6" viewBox="0 0 5 4.6"><path d="M3.3 0.6L1.5 2.3L3.3 4" stroke="#4d6185" stroke-width="1.1" fill="none"/></svg></div>
<div style="left:81.2px;top:427px;width:8.4px;height:8.4px;background:linear-gradient(#c9d8fc,#bcd0fb 60%,#b4c8f6);border:0.5px solid #dfe8fd;border-radius:1.2px"><svg style="left:1.20px;top:1.40px" width="5" height="4.6" viewBox="0 0 5 4.6"><path d="M1.7 0.6L3.5 2.3L1.7 4" stroke="#4d6185" stroke-width="1.1" fill="none"/></svg></div>
<div style="left:13.5px;top:427px;width:59.5px;height:8.4px;background:linear-gradient(#c9d8fc,#bcd0fb 60%,#b4c8f6);border:0.5px solid #e4ecfd;border-radius:1.2px"></div>
<div style="left:89.6px;top:427.2px;width:8px;height:8.6px;background:#ece9d8"></div>
<svg style="left:89.8px;top:427.8px" width="8" height="8" viewBox="0 0 8 8"><path d="M7.4 2.6L2.6 7.4M7.4 4.6L4.6 7.4M7.4 6.4L6.4 7.4" stroke="#b8b4a2" stroke-width="0.7"/><path d="M7.4 3.3L3.3 7.4M7.4 5.3L5.3 7.4" stroke="#fff" stroke-width="0.5"/></svg>
<div style="left:4.5px;top:436px;width:94.5px;height:1px;background:#8ea2c2"></div>
<div style="left:98px;top:278.3px;width:1px;height:158.7px;background:#8ea2c2"></div>
<div style="left:233.5px;top:298.8px;width:8.3px;height:127.8px;background:linear-gradient(90deg,#f0efe8,#fdfdfb 50%,#fff)"></div>
<div style="left:233.5px;top:298.8px;width:8.3px;height:8.6px;background:linear-gradient(90deg,#c9d8fc,#bcd0fb 60%,#b4c8f6);border:0.5px solid #dfe8fd;border-radius:1.2px"><svg style="left:0.95px;top:1.60px" width="5.4" height="4.4" viewBox="0 0 5.4 4.4"><path d="M1 3.1L2.7 1.3L4.4 3.1" stroke="#4d6185" stroke-width="1.1" fill="none"/></svg></div>
<div style="left:233.5px;top:418px;width:8.3px;height:8.6px;background:linear-gradient(90deg,#c9d8fc,#bcd0fb 60%,#b4c8f6);border:0.5px solid #dfe8fd;border-radius:1.2px"><svg style="left:0.95px;top:1.60px" width="5.4" height="4.4" viewBox="0 0 5.4 4.4"><path d="M1 1.3L2.7 3.1L4.4 1.3" stroke="#4d6185" stroke-width="1.1" fill="none"/></svg></div>
<div style="left:233.5px;top:307.6px;width:8.3px;height:104px;background:linear-gradient(90deg,#c9d8fc,#bcd0fb 60%,#b4c8f6);border:0.5px solid #e4ecfd;border-radius:1.2px"></div>
<div style="left:102px;top:427px;width:131.4px;height:8.4px;background:linear-gradient(#f0efe8,#fdfdfb 50%,#fff)"></div>
<div style="left:102px;top:427px;width:8.4px;height:8.4px;background:linear-gradient(#c9d8fc,#bcd0fb 60%,#b4c8f6);border:0.5px solid #dfe8fd;border-radius:1.2px"><svg style="left:1.20px;top:1.40px" width="5" height="4.6" viewBox="0 0 5 4.6"><path d="M3.3 0.6L1.5 2.3L3.3 4" stroke="#4d6185" stroke-width="1.1" fill="none"/></svg></div>
<div style="left:225px;top:427px;width:8.4px;height:8.4px;background:linear-gradient(#c9d8fc,#bcd0fb 60%,#b4c8f6);border:0.5px solid #dfe8fd;border-radius:1.2px"><svg style="left:1.20px;top:1.40px" width="5" height="4.6" viewBox="0 0 5 4.6"><path d="M1.7 0.6L3.5 2.3L1.7 4" stroke="#4d6185" stroke-width="1.1" fill="none"/></svg></div>
<div style="left:111.4px;top:427px;width:61px;height:8.4px;background:linear-gradient(#c9d8fc,#bcd0fb 60%,#b4c8f6);border:0.5px solid #e4ecfd;border-radius:1.2px"></div>
<div style="left:233.4px;top:427.2px;width:8.4px;height:8.6px;background:#ece9d8"></div>
<svg style="left:233.8px;top:427.8px" width="8" height="8" viewBox="0 0 8 8"><path d="M7.4 2.6L2.6 7.4M7.4 4.6L4.6 7.4M7.4 6.4L6.4 7.4" stroke="#b8b4a2" stroke-width="0.7"/><path d="M7.4 3.3L3.3 7.4M7.4 5.3L5.3 7.4" stroke="#fff" stroke-width="0.5"/></svg>
<div style="left:648.6px;top:263.8px;width:8.4px;height:151.7px;background:linear-gradient(90deg,#f0efe8,#fdfdfb 50%,#fff)"></div>
<div style="left:648.6px;top:263.8px;width:8.4px;height:8.6px;background:linear-gradient(90deg,#c9d8fc,#bcd0fb 60%,#b4c8f6);border:0.5px solid #dfe8fd;border-radius:1.2px"><svg style="left:1.00px;top:1.60px" width="5.4" height="4.4" viewBox="0 0 5.4 4.4"><path d="M1 3.1L2.7 1.3L4.4 3.1" stroke="#4d6185" stroke-width="1.1" fill="none"/></svg></div>
<div style="left:648.6px;top:406.9px;width:8.4px;height:8.6px;background:linear-gradient(90deg,#c9d8fc,#bcd0fb 60%,#b4c8f6);border:0.5px solid #dfe8fd;border-radius:1.2px"><svg style="left:1.00px;top:1.60px" width="5.4" height="4.4" viewBox="0 0 5.4 4.4"><path d="M1 1.3L2.7 3.1L4.4 1.3" stroke="#4d6185" stroke-width="1.1" fill="none"/></svg></div>
<div style="left:648.6px;top:383.6px;width:8.4px;height:23.4px;background:linear-gradient(90deg,#c9d8fc,#bcd0fb 60%,#b4c8f6);border:0.5px solid #e4ecfd;border-radius:1.2px"></div>
<div style="left:246px;top:416.2px;width:402.2px;height:8.4px;background:linear-gradient(#f0efe8,#fdfdfb 50%,#fff)"></div>
<div style="left:246px;top:416.2px;width:8.4px;height:8.4px;background:linear-gradient(#c9d8fc,#bcd0fb 60%,#b4c8f6);border:0.5px solid #dfe8fd;border-radius:1.2px"><svg style="left:1.20px;top:1.40px" width="5" height="4.6" viewBox="0 0 5 4.6"><path d="M3.3 0.6L1.5 2.3L3.3 4" stroke="#4d6185" stroke-width="1.1" fill="none"/></svg></div>
<div style="left:639.8px;top:416.2px;width:8.4px;height:8.4px;background:linear-gradient(#c9d8fc,#bcd0fb 60%,#b4c8f6);border:0.5px solid #dfe8fd;border-radius:1.2px"><svg style="left:1.20px;top:1.40px" width="5" height="4.6" viewBox="0 0 5 4.6"><path d="M1.7 0.6L3.5 2.3L1.7 4" stroke="#4d6185" stroke-width="1.1" fill="none"/></svg></div>
<div style="left:255.5px;top:416.2px;width:260px;height:8.4px;background:linear-gradient(#c9d8fc,#bcd0fb 60%,#b4c8f6);border:0.5px solid #e4ecfd;border-radius:1.2px"></div>
<div style="left:648.8px;top:428px;width:8.2px;height:3.8px;background:linear-gradient(#c9d8fc,#bcd0fb 60%,#b4c8f6);border-radius:1.2px"><div style="left:3.5px;top:1.4px;width:1.2px;height:0.9px;background:#4d6185"></div></div>
<div style="left:648.8px;top:432.2px;width:8.2px;height:3.8px;background:linear-gradient(#c9d8fc,#bcd0fb 60%,#b4c8f6);border-radius:1.2px"><div style="left:3.5px;top:1.4px;width:1.2px;height:0.9px;background:#4d6185"></div></div>
<div style="left:3.3px;top:440.4px;width:657.7px;height:11.3px;background:#ece9d8;border-top:0.6px solid #fff"></div>
<div style="left:441.6px;top:441.4px;width:0.6px;height:9px;background:#cdcabb"></div>
<div style="left:442.2px;top:441.4px;width:0.6px;height:9px;background:#fff"></div>
<div class="u st" style="left:444.6px;top:442.6px;width:29.4px;height:8px;color:#000">Ln 1, Col 1</div>
<div style="left:474.6px;top:441.4px;width:0.6px;height:9px;background:#cdcabb"></div>
<div style="left:475.2px;top:441.4px;width:0.6px;height:9px;background:#fff"></div>
<div class="u st" style="left:477.6px;top:442.6px;width:37.4px;height:8px;color:#000">Sys 0:&lt;Local&gt;</div>
<div style="left:515.4px;top:441.4px;width:0.6px;height:9px;background:#cdcabb"></div>
<div style="left:516px;top:441.4px;width:0.6px;height:9px;background:#fff"></div>
<div class="u st" style="left:518.4px;top:442.6px;width:35.6px;height:8px;color:#000">Proc 000:ce8</div>
<div style="left:553.8px;top:441.4px;width:0.6px;height:9px;background:#cdcabb"></div>
<div style="left:554.4px;top:441.4px;width:0.6px;height:9px;background:#fff"></div>
<div class="u st" style="left:556.8px;top:442.6px;width:36.2px;height:8px;color:#000">Thrd 008:b58</div>
<div style="left:593.2px;top:441.4px;width:0.6px;height:9px;background:#cdcabb"></div>
<div style="left:593.8px;top:441.4px;width:0.6px;height:9px;background:#fff"></div>
<div class="u st" style="left:596.2px;top:442.6px;width:12.8px;height:8px;color:#b0ae9e">ASM</div>
<div style="left:609.4px;top:441.4px;width:0.6px;height:9px;background:#cdcabb"></div>
<div style="left:610px;top:441.4px;width:0.6px;height:9px;background:#fff"></div>
<div class="u st" style="left:612.4px;top:442.6px;width:12.6px;height:8px;color:#b0ae9e">OVR</div>
<div style="left:625.4px;top:441.4px;width:0.6px;height:9px;background:#cdcabb"></div>
<div style="left:626px;top:441.4px;width:0.6px;height:9px;background:#fff"></div>
<div class="u st" style="left:628.4px;top:442.6px;width:14.6px;height:8px;color:#b0ae9e"><span style="position:static;font-size:5.3px">CAPS</span></div>
<div style="left:643.4px;top:441.4px;width:0.6px;height:9px;background:#cdcabb"></div>
<div style="left:644px;top:441.4px;width:0.6px;height:9px;background:#fff"></div>
<div class="u st" style="left:646.4px;top:442.6px;width:12.6px;height:8px;color:#000">NUM</div>
</body></html>
